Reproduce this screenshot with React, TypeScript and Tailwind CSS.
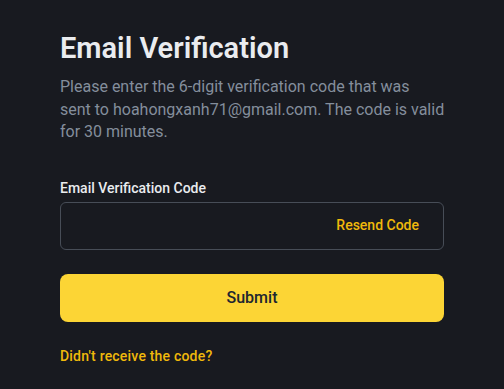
export default function App() {
    return (
        <div
            className="min-h-screen bg-[#181a20] px-[60px] pt-[30px]"
            style={{ fontFamily: "Roboto, 'Noto Sans', sans-serif" }}
        >
            <div className="w-[384px]">
                <h1 className="text-[29px] font-semibold leading-[36px] text-[#eaecef]">
                    Email Verification
                </h1>
                <p className="mt-[10px] whitespace-nowrap text-[16px] leading-[22.5px] text-[#848e9c]">
                    Please enter the 6-digit verification code that was
                    <br />
                    sent to hoahongxanh71@gmail.com. The code is valid
                    <br />
                    for 30 minutes.
                </p>

                <label className="mt-[34px] block text-[14px] font-medium leading-[20px] text-[#eaecef]">
                    Email Verification Code
                </label>
                <div className="mt-[4px] flex h-[48px] items-center rounded-[6px] border border-[#474d57] pl-4 pr-6">
                    <input
                        className="min-w-0 flex-1 bg-transparent text-[14px] text-[#eaecef] outline-none"
                        type="text"
                    />
                    <button className="text-[14px] font-medium text-[#f0b90b]">Resend Code</button>
                </div>

                <button className="mt-[24px] h-[48px] w-full rounded-[8px] bg-[#fcd535] text-[16px] font-medium text-[#202630]">
                    Submit
                </button>

                <button className="mt-[24px] block text-[14px] font-medium leading-[20px] tracking-[0.2px] text-[#f0b90b]">
                    Didn't receive the code?
                </button>
            </div>
        </div>
    );
}
